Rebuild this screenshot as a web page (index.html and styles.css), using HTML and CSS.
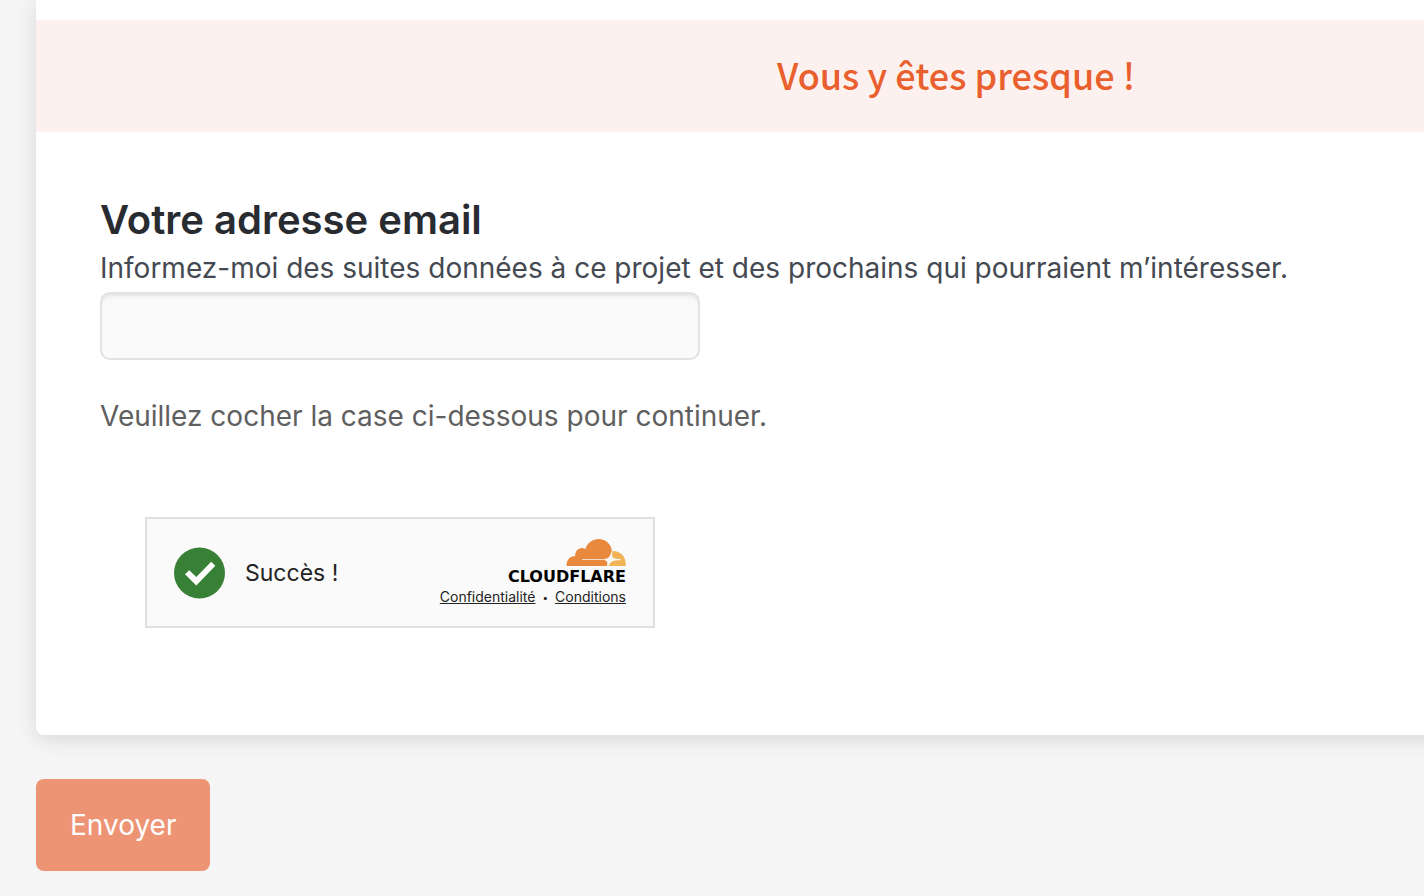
FILE: index.html
```
<!DOCTYPE html>
<html lang="fr">
<head>
    <meta charset="UTF-8">
    <meta name="viewport" content="width=device-width, initial-scale=1">
    <title>Vous y êtes presque !</title>
    <link rel="stylesheet" href="styles.css">
</head>
<body>

<form class="page">
    <div class="card">
        <h1 class="banner">Vous y êtes presque !</h1>

        <div class="content">
            <label class="title" for="email">Votre adresse email</label>
            <p class="help" id="email-help">Informez-moi des suites données à ce projet et des prochains qui pourraient m’intéresser.</p>
            <input class="email" type="email" id="email" name="email" aria-describedby="email-help">

            <p class="notice">Veuillez cocher la case ci-dessous pour continuer.</p>

            <div class="captcha">
                <svg class="check" viewBox="0 0 52 52" aria-hidden="true">
                    <circle cx="25.5" cy="26" r="25.5" fill="#388036"/>
                    <path d="M11 27.3 22.3 38.5 41.3 18.8 37.2 14.8 22.3 30 15.2 23.3Z" fill="#fff"/>
                </svg>
                <span class="status">Succès !</span>

                <div class="brand">
                    <svg class="cloud" viewBox="0 0 60 28" aria-hidden="true">
                        <path d="M45.8 12C50.2 11.8 53.6 13.2 56.2 15.8 58.9 18.6 59.9 22.2 59.7 27H41.5V20Z" fill="#f2b356"/>
                        <path d="M.6 27C.4 20.5 4 17.2 9.2 17 8.8 11.3 14.4 7 19.2 10 21.8 3.8 26.6 0 32.6 0 39.8 0 45.2 5.2 45.9 12L44 20 41.5 27Z" fill="#e9893e"/>
                        <path d="M45.4 12.5 46.4 12Q45.6 17 46.8 18.6 48.5 20.2 55 20.4V21Q48.5 21.2 46.6 22.2 43.5 23.5 42.5 27.5H40.8Q41.8 24 41 22.8 40.5 21.4 38 21H16V20.2H38Q42 19.6 43.5 17.5 44.8 15.5 45.4 12.5Z" fill="#fafafa"/>
                    </svg>
                    <span class="name">CLOUDFLARE</span>
                    <div class="links">
                        <a href="#">Confidentialité</a>
                        <span class="dot">•</span>
                        <a href="#">Conditions</a>
                    </div>
                </div>
            </div>
        </div>
    </div>

    <button class="send" type="submit">Envoyer</button>
</form>

</body>
</html>
```
FILE: styles.css
```
* {
    box-sizing: border-box;
}

body {
    margin: 0;
    background: #f5f5f5;
    font-family: Inter, "Liberation Sans", sans-serif;
    font-size: 28px;
    line-height: 40px;
}

h1,
p {
    margin: 0;
}

.page {
    padding: 0 0 24px 36px;
    overflow: hidden;
}

/* the card runs past the right edge of the window */
.card {
    margin-right: -452px;
    padding-top: 20px;
    background: #fff;
    border-radius: 0 0 8px 8px;
    box-shadow: 0 4px 20px rgba(0, 0, 0, 0.12);
}

.banner {
    padding: 30px 32px 34px;
    background: #fdf1ef;
    color: #e95f2d;
    font-family: "Noto Sans CJK SC", "Noto Sans", sans-serif;
    font-size: 36px;
    font-weight: 500;
    line-height: 48px;
    text-align: center;
}

.content {
    padding: 64px 64px 107px;
}

.title {
    display: block;
    color: #282b30;
    font-size: 40px;
    font-weight: 600;
    line-height: 48px;
}

.help {
    padding: 4px 0;
    color: #444952;
}

.email {
    display: block;
    width: 600px;
    max-width: 100%;
    height: 68px;
    padding: 0 16px;
    background: #fafafa;
    border: 2px solid #e2e2e2;
    border-radius: 10px;
    box-shadow: inset 0 4px 4px -2px rgba(0, 0, 0, 0.1);
    font: inherit;
}

.notice {
    margin-top: 36px;
    color: #5f5f5f;
}

.captcha {
    display: flex;
    align-items: center;
    width: 510px;
    height: 111px;
    margin: 81px 0 0 45px;
    padding: 0 27px;
    background: #fafafa;
    border: 2px solid #e0e0e0;
}

.check {
    width: 52px;
    height: 52px;
}

.status {
    margin-left: 19px;
    color: #232323;
    font-size: 23px;
}

.brand {
    display: flex;
    flex-direction: column;
    align-items: flex-end;
    margin-left: auto;
}

.cloud {
    width: 60px;
    height: 28px;
}

.name {
    color: #000;
    font-family: "DejaVu Sans", sans-serif;
    font-size: 16px;
    font-weight: 700;
    line-height: 20px;
}

.links {
    display: flex;
    gap: 7px;
    color: #232323;
    font-size: 14px;
    line-height: 20px;
}

.links a {
    color: inherit;
}

.dot {
    font-size: 10px;
}

.send {
    margin-top: 44px;
    padding: 26px 34px;
    background: #ed9474;
    border: 0;
    border-radius: 8px;
    color: #fff;
    font: inherit;
}
```
